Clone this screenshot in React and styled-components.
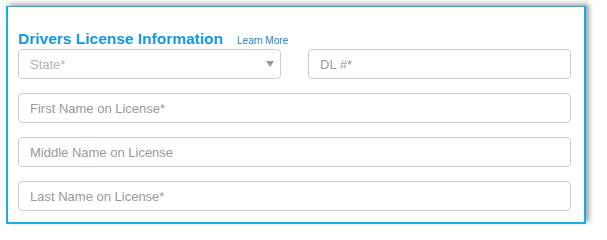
import React from 'react'
import styled, { createGlobalStyle } from 'styled-components'

const Global = createGlobalStyle`
  html, body {
    margin: 0;
    background: #fff;
    font-family: "Liberation Sans", Arial, sans-serif;
  }
`

const Page = styled.div`
  height: 240px;
  box-sizing: border-box;
  padding: 6px 0 0 6px;
  background: #fff;
`

const Card = styled.div`
  width: 580px;
  height: 218px;
  box-sizing: border-box;
  border: 2px solid #14b0ee;
  border-top-width: 1px;
  background: #fff;
  padding: 22px 13px 0 10px;
  box-shadow: 3px -2px 5px rgba(0, 0, 0, 0.38);
`

const Header = styled.div`
  display: flex;
  align-items: baseline;
  height: 20px;
`

const Title = styled.h2`
  margin: 0;
  font-size: 15.5px;
  line-height: 20px;
  font-weight: bold;
  color: #1499dc;
`

const LearnMore = styled.a`
  margin-left: 14px;
  font-size: 10px;
  color: #1b7fc4;
  text-decoration: none;
`

const Rows = styled.div`
  display: flex;
  flex-direction: column;
  gap: 14px;
`

const Row = styled.div`
  display: grid;
  grid-template-columns: ${p => (p.cols === 2 ? '1fr 1fr' : '1fr')};
  gap: 27px;
`

const Field = styled.div`
  position: relative;
  height: 30px;
  box-sizing: border-box;
  border: 1px solid #cfcfcf;
  border-radius: 4px;
  background: #fff;
  display: flex;
  align-items: center;
  padding: 0 11px;
  font-size: 13px;
  color: ${p => (p.muted ? '#b5b5b5' : '#9a9a9a')};
`

const Caret = styled.span`
  position: absolute;
  right: 6px;
  top: 11px;
  width: 0;
  height: 0;
  border-left: 4px solid transparent;
  border-right: 4px solid transparent;
  border-top: 6px solid #999;
`

export default function App() {
  return (
    <Page>
      <Global />
      <Card>
        <Header>
          <Title>Drivers License Information</Title>
          <LearnMore href="#">Learn More</LearnMore>
        </Header>
        <Rows>
          <Row cols={2}>
            <Field muted>
              State*
              <Caret />
            </Field>
            <Field>DL #*</Field>
          </Row>
          <Row>
            <Field>First Name on License*</Field>
          </Row>
          <Row>
            <Field>Middle Name on License</Field>
          </Row>
          <Row>
            <Field>Last Name on License*</Field>
          </Row>
        </Rows>
      </Card>
    </Page>
  )
}
